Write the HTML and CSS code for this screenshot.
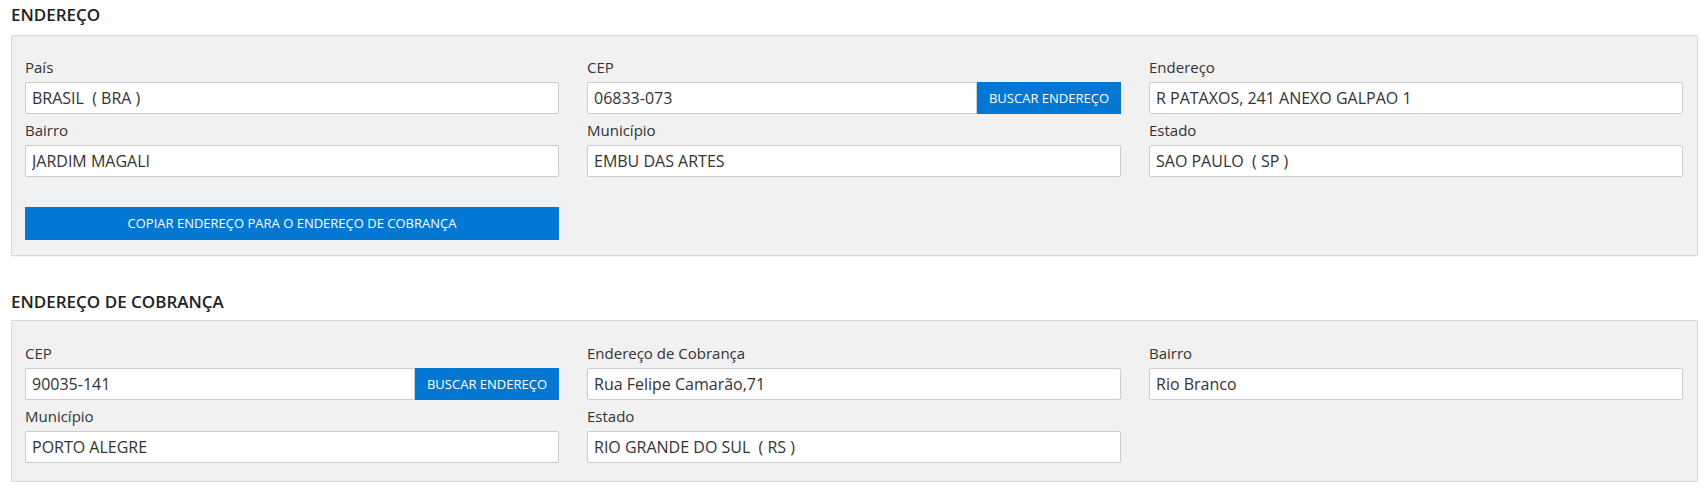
FILE: index.html
```html
<!DOCTYPE html>
<html lang="pt-BR">
<head>
<meta charset="utf-8">
<title>Endereço</title>
<link rel="stylesheet" href="styles.css">
</head>
<body>
<div class="page">
  <h2 class="section-title">ENDEREÇO</h2>
  <div class="panel">
    <div class="grid">
      <div class="field">
        <label class="label">País</label>
        <input class="input" type="text" value="BRASIL  ( BRA )" readonly>
      </div>
      <div class="field">
        <label class="label">CEP</label>
        <div class="input-group">
          <input class="input" type="text" value="06833-073" readonly>
          <button class="btn btn-addon" type="button">BUSCAR ENDEREÇO</button>
        </div>
      </div>
      <div class="field">
        <label class="label">Endereço</label>
        <input class="input" type="text" value="R PATAXOS, 241 ANEXO GALPAO 1" readonly>
      </div>
      <div class="field">
        <label class="label">Bairro</label>
        <input class="input" type="text" value="JARDIM MAGALI" readonly>
      </div>
      <div class="field">
        <label class="label">Município</label>
        <input class="input" type="text" value="EMBU DAS ARTES" readonly>
      </div>
      <div class="field">
        <label class="label">Estado</label>
        <input class="input" type="text" value="SAO PAULO  ( SP )" readonly>
      </div>
      <div class="actions">
        <button class="btn btn-block" type="button">COPIAR ENDEREÇO PARA O ENDEREÇO DE COBRANÇA</button>
      </div>
    </div>
  </div>

  <h2 class="section-title section-title-next">ENDEREÇO DE COBRANÇA</h2>
  <div class="panel panel-billing">
    <div class="grid">
      <div class="field">
        <label class="label">CEP</label>
        <div class="input-group">
          <input class="input" type="text" value="90035-141" readonly>
          <button class="btn btn-addon" type="button">BUSCAR ENDEREÇO</button>
        </div>
      </div>
      <div class="field">
        <label class="label">Endereço de Cobrança</label>
        <input class="input" type="text" value="Rua Felipe Camarão,71" readonly>
      </div>
      <div class="field">
        <label class="label">Bairro</label>
        <input class="input" type="text" value="Rio Branco" readonly>
      </div>
      <div class="field">
        <label class="label">Município</label>
        <input class="input" type="text" value="PORTO ALEGRE" readonly>
      </div>
      <div class="field">
        <label class="label">Estado</label>
        <input class="input" type="text" value="RIO GRANDE DO SUL  ( RS )" readonly>
      </div>
    </div>
  </div>
</div>
</body>
</html>
```

FILE: styles.css
```css
* {
  box-sizing: border-box;
}

html, body {
  margin: 0;
  padding: 0;
  background: #ffffff;
}

body {
  font-family: "Open Sans", "Liberation Sans", sans-serif;
  color: #333333;
}

.page {
  padding: 3px 10px 0 11px;
}

.section-title {
  margin: 0 0 8px 0;
  font-size: 17px;
  line-height: 24px;
  font-weight: 600;
  color: #222222;
}

.section-title-next {
  margin-top: 34px;
  margin-bottom: 6px;
}

.panel {
  background: #f1f1f1;
  border: 1px solid #d7d7d7;
  border-radius: 2px;
  box-shadow: 0 1px 1px rgba(0, 0, 0, 0.04);
  padding: 15px 14px 15px 13px;
}

.panel-billing {
  padding-top: 16px;
  padding-bottom: 18px;
}

.grid {
  display: grid;
  grid-template-columns: repeat(3, 1fr);
  column-gap: 28px;
}

.field {
  display: flex;
  flex-direction: column;
  min-width: 0;
}

.label {
  display: block;
  margin: 6px 0 5px;
  font-size: 15px;
  line-height: 20px;
  color: #333333;
}

.input {
  display: block;
  width: 100%;
  height: 32px;
  margin: 0;
  padding: 0 6px;
  border: 1px solid #cccccc;
  border-radius: 2px;
  background: #ffffff;
  font-family: "Open Sans", "Liberation Sans", sans-serif;
  font-size: 16px;
  color: #333333;
  outline: none;
}

.input-group {
  display: flex;
}

.input-group .input {
  flex: 1 1 auto;
  min-width: 0;
  border-top-right-radius: 0;
  border-bottom-right-radius: 0;
}

.btn {
  margin: 0;
  border: none;
  background: #0477d3;
  color: #ffffff;
  font-family: "Open Sans", "Liberation Sans", sans-serif;
  font-size: 13px;
  line-height: 1;
  cursor: pointer;
}

.btn-addon {
  flex: 0 0 auto;
  height: 32px;
  padding: 0 12px;
  white-space: nowrap;
}

.actions {
  grid-column: 1;
  margin-top: 30px;
}

.btn-block {
  display: block;
  width: 100%;
  height: 33px;
}
```
